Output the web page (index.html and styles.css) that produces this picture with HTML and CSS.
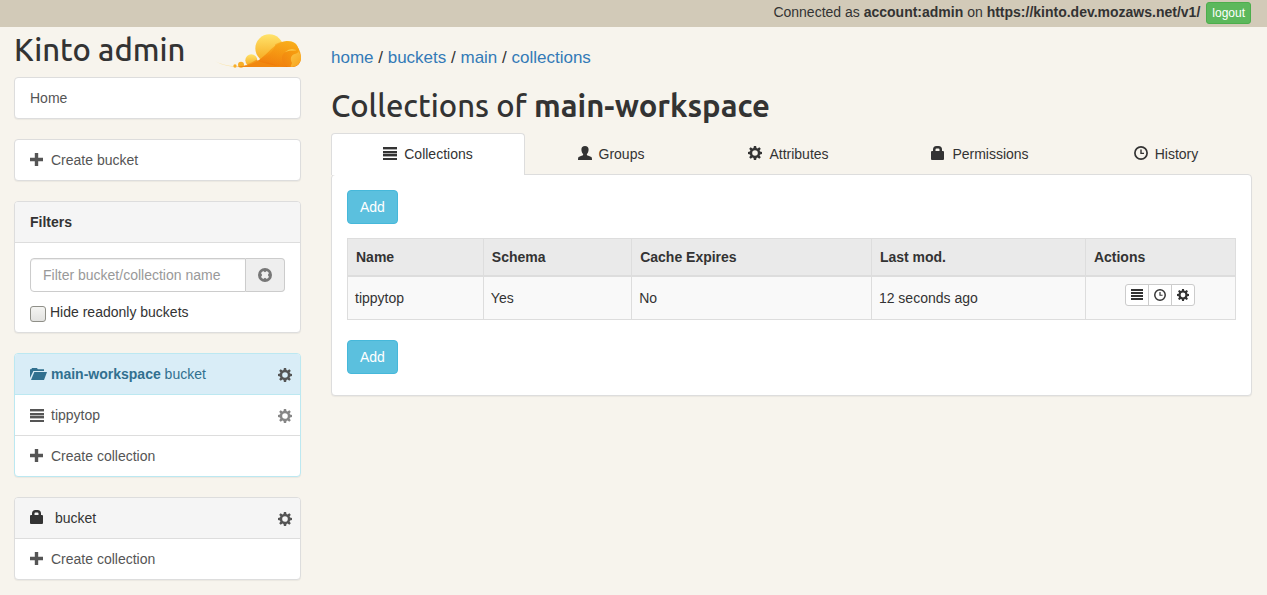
FILE: index.html
```html
<!DOCTYPE html>
<html lang="en">
<head>
<meta charset="utf-8">
<title>Kinto admin</title>
<link rel="stylesheet" href="styles.css">
</head>
<body>
<svg class="sprite" aria-hidden="true">
  <symbol id="list" viewBox="0 0 14 14"><path d="M0 1h14v2H0zM0 5h14v2H0zM0 8h14v2H0zM0 12h14v2H0z"/><path opacity=".4" d="M0 3h14v1H0zM0 7h14v1H0zM0 10h14v1H0z"/></symbol>
  <symbol id="list-small" viewBox="0 0 12 12"><path d="M0 0h12v2H0zM0 3h12v2H0zM0 6h12v2H0zM0 9h12v2H0z"/></symbol>
  <symbol id="plus" viewBox="0 0 14 14"><path d="M4.800 0h3.400v4.800H13v3.400H8.200V13H4.800V8.200H0V4.800h4.800z"/></symbol>
  <symbol id="gear" viewBox="0 0 14 14"><path fill-rule="evenodd" d="M5.900 0h2.200l.4 1.900 1.100.5 1.700-1.200 1.500 1.500-1.200 1.700.5 1.100 1.900.4v2.200l-1.900.4-.5 1.100 1.200 1.700-1.500 1.500-1.700-1.200-1.100.5L8.100 14H5.900l-.4-1.900-1.100-.5-1.700 1.200-1.500-1.500 1.200-1.700-.5-1.100L0 8.100V5.900l1.900-.4.5-1.100-1.200-1.700 1.500-1.500 1.700 1.200 1.100-.5zM7 4.200a2.800 2.800 0 1 0 0 5.600 2.800 2.800 0 0 0 0-5.600z"/></symbol>
  <symbol id="lock" viewBox="0 0 14 14"><path fill-rule="evenodd" d="M2 5V3.500A3.500 3.500 0 0 1 5.500 0h2A3.500 3.500 0 0 1 11 3.500V5h1a1 1 0 0 1 1 1v7a1 1 0 0 1-1 1H1a1 1 0 0 1-1-1V6a1 1 0 0 1 1-1zm2.500 0h4V3.500a1 1 0 0 0-1-1h-2a1 1 0 0 0-1 1z"/></symbol>
  <symbol id="clock" viewBox="0 0 14 14"><circle cx="7" cy="7" r="6.100" fill="none" stroke="currentColor" stroke-width="1.700"/><path d="M6.300 3.500h1.400v3.200H10V8H6.300z"/></symbol>
  <symbol id="user" viewBox="0 0 14 14"><path d="M7 0c2.400 0 3.600 1.400 3.600 3.600 0 1.900-.6 3.500-1.700 4.500v.9c0 .5 4.500 1.500 4.800 2.400.3.600.3 1.700.3 2.600H0c0-.9 0-2 .3-2.600.3-.9 4.800-1.900 4.800-2.400v-.9C4 7.100 3.400 5.500 3.400 3.600 3.400 1.400 4.600 0 7 0z"/></symbol>
  <symbol id="remove" viewBox="0 0 14 14"><path fill-rule="evenodd" d="M7 0a7 7 0 1 1 0 14A7 7 0 0 1 7 0zM5.100 3 3 5.100 4.200 7 3 8.900 5.100 11 7 9.800 8.900 11 11 8.900 9.800 7 11 5.100 8.900 3 7 4.200z"/></symbol>
  <symbol id="folder" viewBox="0 0 17 14"><path d="M0 11V2.300h1.300L2 1h5l.8 1.300H14V4H3.400z"/><path d="M4.300 5H17l-3 8H1z"/></symbol>
</svg>

<header class="topbar">
  <span>Connected as <strong>account:admin</strong> on <strong>https://kinto.dev.mozaws.net/v1/</strong></span>
  <button class="logout" type="button">logout</button>
</header>

<div class="layout">
  <aside class="sidebar">
    <div class="brand">
      <h1 class="title">Kinto admin</h1>
      <svg class="logo" viewBox="0 12 258 105" role="img" aria-label="Kinto cloud">
        <defs>
          <linearGradient id="sun" x2="0" y2="1"><stop offset="0" stop-color="#ffe36b"/><stop offset="1" stop-color="#f6a61c"/></linearGradient>
          <linearGradient id="wave" x1=".8" y1="0" x2=".5" y2="1"><stop offset="0" stop-color="#fbc02b"/><stop offset=".5" stop-color="#f79a15"/><stop offset="1" stop-color="#ee7308"/></linearGradient>
          <linearGradient id="hook" x1="0" y1="1" x2="1" y2="0"><stop offset="0" stop-color="#f08010"/><stop offset="1" stop-color="#f8a30f"/></linearGradient>
          <linearGradient id="curl" x1="0" y1="0" x2="1" y2="1"><stop offset="0" stop-color="#fdd152"/><stop offset="1" stop-color="#f7a21c"/></linearGradient>
        </defs>
        <path d="M0 97q28 14 62 15l10 3q-42-1-72-18z" fill="#fbe3a6"/>
        <circle cx="163" cy="58" r="42" fill="url(#sun)"/>
        <circle cx="109" cy="94" r="18" fill="url(#sun)"/>
        <circle cx="78" cy="107" r="9" fill="#f7ae27"/>
        <circle cx="60" cy="111" r="5" fill="#f7ae27"/>
        <path d="M62 114q45-2 74-24c26-21 35-37 60-49 28-12 50-2 54 17 5 8 8 17 8 28 0 18-12 28-28 28z" fill="url(#wave)"/>
        <path d="M181 46c10-6 22-9 35-9 19 0 33 9 34 26-6 8-20 5-31 8-15 4-19 19-6 42h-20c-18-9-36-15-58-18 24-12 42-29 46-49z" fill="url(#hook)" opacity=".55"/>
        <circle cx="231" cy="87" r="27" fill="url(#curl)"/>
        <path d="M202 95c-4-15 4-27 19-29 12-2 23 3 29-9 4 10-1 16-11 18-11 3-15 14-8 27l-5 12c-12 0-21-8-24-19z" fill="url(#hook)"/>
        <path d="M65 114q30-3 59-22c20 12 60 19 98 22z" fill="#f28e13" opacity=".75"/>
      </svg>
    </div>

    <nav class="panel"><a class="item" href="#">Home</a></nav>
    <nav class="panel"><a class="item" href="#"><svg class="icon"><use href="#plus"/></svg>Create bucket</a></nav>

    <section class="panel">
      <h2 class="item panel-head"><strong>Filters</strong></h2>
      <form class="filters">
        <div class="input-group">
          <input class="search" type="text" placeholder="Filter bucket/collection name" aria-label="Filter bucket/collection name">
          <button class="clear" type="button" aria-label="Clear filter"><svg class="icon"><use href="#remove"/></svg></button>
        </div>
        <div class="check"><input class="tick" type="checkbox" id="readonly"><label for="readonly">Hide readonly buckets</label></div>
      </form>
    </section>

    <section class="panel panel-info">
      <div class="item panel-head"><svg class="icon folder"><use href="#folder"/></svg><span class="grow"><strong>main-workspace</strong> bucket</span><a class="settings" href="#" aria-label="Bucket settings"><svg class="icon"><use href="#gear"/></svg></a></div>
      <div class="item"><svg class="icon"><use href="#list"/></svg><a class="grow" href="#">tippytop</a><a class="settings faded" href="#" aria-label="Collection settings"><svg class="icon"><use href="#gear"/></svg></a></div>
      <a class="item" href="#"><svg class="icon"><use href="#plus"/></svg>Create collection</a>
    </section>

    <section class="panel">
      <div class="item panel-head"><svg class="icon lock"><use href="#lock"/></svg><span class="grow">bucket</span><a class="settings" href="#" aria-label="Bucket settings"><svg class="icon"><use href="#gear"/></svg></a></div>
      <a class="item" href="#"><svg class="icon"><use href="#plus"/></svg>Create collection</a>
    </section>
  </aside>

  <main>
    <nav class="crumbs"><a href="#">home</a> / <a href="#">buckets</a> / <a href="#">main</a> / <a href="#">collections</a></nav>
    <h1 class="title page-title">Collections of <b>main-workspace</b></h1>
    <nav class="tabs">
      <a class="tab active" href="#"><svg class="icon"><use href="#list"/></svg>Collections</a>
      <a class="tab" href="#"><svg class="icon"><use href="#user"/></svg>Groups</a>
      <a class="tab medium" href="#"><svg class="icon"><use href="#gear"/></svg>Attributes</a>
      <a class="tab wide" href="#"><svg class="icon"><use href="#lock"/></svg>Permissions</a>
      <a class="tab" href="#"><svg class="icon"><use href="#clock"/></svg>History</a>
    </nav>
    <section class="content">
      <button class="add" type="button">Add</button>
      <table class="records">
        <colgroup><col class="c-name"><col class="c-schema"><col class="c-cache"><col class="c-mod"><col class="c-actions"></colgroup>
        <thead><tr><th>Name</th><th>Schema</th><th>Cache Expires</th><th>Last mod.</th><th>Actions</th></tr></thead>
        <tbody><tr><td>tippytop</td><td>Yes</td><td>No</td><td>12 seconds ago</td>
          <td class="actions"><div class="btn-group"><button type="button" aria-label="Records"><svg class="icon"><use href="#list-small"/></svg></button><button type="button" aria-label="History"><svg class="icon"><use href="#clock"/></svg></button><button type="button" aria-label="Attributes"><svg class="icon"><use href="#gear"/></svg></button></div></td></tr></tbody>
      </table>
      <button class="add" type="button">Add</button>
    </section>
  </main>
</div>
</body>
</html>
```
FILE: styles.css
```css
* { box-sizing: border-box; }
body {
  margin: 0;
  background: #f7f4ed;
  color: #333;
  font: 14px/20px "Liberation Sans", Arial, sans-serif;
}
a { color: #337ab7; text-decoration: none; }
button, input { font: inherit; margin: 0; }
button { cursor: pointer; }
.sprite { position: absolute; width: 0; height: 0; }
.icon { width: 14px; height: 14px; fill: currentColor; flex: none; display: block; }

.topbar {
  display: flex;
  justify-content: flex-end;
  gap: 6px;
  height: 27px;
  padding: 2px 16px 3px;
  background: #d2cab8;
}
.logout {
  height: 22px;
  padding: 0 5px;
  border: 1px solid #4cae4c;
  border-radius: 3px;
  background: #5cb85c;
  color: #fff;
  font-size: 12px;
  line-height: 20px;
}

.layout {
  display: grid;
  grid-template-columns: 287fr 921fr;
  gap: 30px;
  padding: 0 15px 0 14px;
}
.title {
  margin: 0;
  font: 500 31px/36px Ubuntu, "Noto Sans", sans-serif;
  white-space: nowrap;
}
.brand {
  display: flex;
  justify-content: space-between;
  align-items: center;
  height: 50px;
  padding-bottom: 4px;
}
.logo { width: 86px; height: 35px; }

.panel {
  margin-bottom: 20px;
  border: 1px solid #ddd;
  border-radius: 4px;
  background: #fff;
  box-shadow: 0 1px 1px rgba(0, 0, 0, .05);
  overflow: hidden;
}
.item {
  display: flex;
  align-items: center;
  gap: 7px;
  height: 40px;
  margin: 0;
  padding: 0 8px 0 15px;
  color: #555;
  font-size: 14px;
  font-weight: 400;
}
.item a { color: #555; }
.item + .item { height: 41px; border-top: 1px solid #ddd; }
.panel-head { background: #f5f5f5; color: #333; }
.panel-info, .panel-info .panel-head + .item { border-color: #bce8f1; }
.panel-info .panel-head { background: #d9edf7; color: #31708f; gap: 4px; }
.folder { width: 17px; }
.lock { margin: 0 4px 2px 0; }
.grow { flex: 1; }
.settings { padding-top: 2px; }
.faded { opacity: .7; }

.filters { padding: 15px 15px 10px; border-top: 1px solid #ddd; }
.input-group { display: flex; height: 34px; margin-bottom: 10px; }
.search {
  flex: 1;
  min-width: 0;
  padding: 6px 12px;
  border: 1px solid #ccc;
  border-radius: 4px 0 0 4px;
  box-shadow: inset 0 1px 1px rgba(0, 0, 0, .075);
}
.search::placeholder { color: #999; }
.clear {
  display: grid;
  place-items: center;
  width: 39px;
  border: 1px solid #ccc;
  border-left: 0;
  border-radius: 0 4px 4px 0;
  background: #eee;
  color: #777;
}
.check { display: flex; align-items: flex-start; gap: 4px; }
.tick {
  appearance: none;
  width: 16px;
  height: 16px;
  margin-top: 4px;
  border: 1px solid #8f8f88;
  border-radius: 3px;
  background: linear-gradient(#f4f4f2, #e2e2e0);
}

.crumbs { padding-top: 20px; font-size: 17px; line-height: 22px; }
.page-title { padding: 19px 0 9px; height: 64px; }
.tabs { display: flex; }
.tab {
  display: flex;
  flex: 172 1 0;
  justify-content: center;
  gap: 7px;
  height: 41px;
  padding: 11px 0 10px;
  color: #333;
}
.tab.medium { flex-grow: 183; }
.tab.wide { flex-grow: 200; }
.tab .icon { margin-top: 2px; }
.tab.active {
  flex-grow: 192;
  height: 42px;
  margin-bottom: -1px;
  padding-top: 10px;
  border: 1px solid #ddd;
  border-bottom: 0;
  border-radius: 4px 4px 0 0;
  background: #fff;
  z-index: 1;
}
.content {
  padding: 15px 15px 21px;
  border: 1px solid #ddd;
  border-radius: 4px;
  background: #fff;
  box-shadow: 0 1px 1px rgba(0, 0, 0, .05);
}
.add {
  display: block;
  height: 34px;
  padding: 0 12px;
  border: 1px solid #46b8da;
  border-radius: 4px;
  background: #5bc0de;
  color: #fff;
}
.records {
  width: 100%;
  margin: 14px 0 20px;
  border-collapse: collapse;
  table-layout: fixed;
  background: #f9f9f9;
}
.records th, .records td {
  padding: 8px;
  border: 1px solid #ddd;
  text-align: left;
}
.records th { background: #eaeaea; border-bottom-width: 2px; }
.records td { height: 43px; padding: 7px; }
.records .actions { vertical-align: top; }
.c-name { width: 15.3%; }
.c-schema { width: 16.7%; }
.c-cache { width: 27%; }
.c-mod { width: 24.1%; }
.c-actions { width: 16.9%; }
.btn-group { display: flex; justify-content: center; }
.btn-group button {
  display: grid;
  place-items: center;
  width: 24px;
  height: 22px;
  padding: 0 0 1px;
  border: 1px solid #ccc;
  background: #fff;
  color: #333;
}
.btn-group .icon { width: 12px; height: 12px; }
.btn-group button + button { margin-left: -1px; }
.btn-group button:first-child { border-radius: 3px 0 0 3px; }
.btn-group button:last-child { border-radius: 0 3px 3px 0; }
```
